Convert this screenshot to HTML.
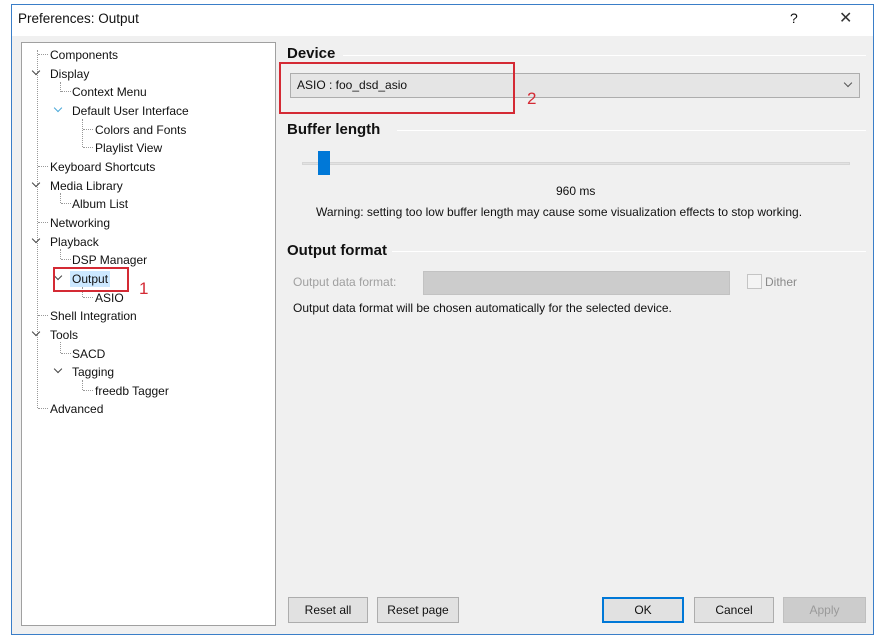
<!DOCTYPE html>
<html><head><meta charset="utf-8"><style>
*{margin:0;padding:0;box-sizing:border-box}
body{width:878px;height:639px;background:#fff;position:relative;overflow:hidden;font-family:"Liberation Sans",sans-serif;font-size:12px;color:#111}
.a{position:absolute;white-space:nowrap}
.win{position:absolute;left:11px;top:4px;width:863px;height:631px;border:1px solid #3a7ec8;background:#f0f0f0}
.title{position:absolute;left:12px;top:5px;width:861px;height:31px;background:#fff}
.tree{position:absolute;left:21px;top:42px;width:255px;height:584px;background:#fff;border:1px solid #a0a0a0}
.r{position:absolute;height:16px;line-height:16px;font-size:12px;white-space:nowrap}
.vl{position:absolute;border-left:1px dotted #999;width:0}
.hl{position:absolute;border-top:1px dotted #999;height:0}
.chev{position:absolute;width:6px;height:6px;border-right:1.5px solid #444;border-bottom:1.5px solid #444;transform:rotate(45deg)}
.h{position:absolute;font-weight:bold;font-size:15px;color:#111}
.line{position:absolute;height:1px;background:#a8a8a8;border-bottom:1px solid #fff}
.btn{position:absolute;height:26px;top:597px;background:#e1e1e1;border:1px solid #adadad;text-align:center;line-height:24px;font-size:12px}
.red{position:absolute;border:2px solid #d42a34}
</style></head><body>
<div class="win"></div>
<div class="title"></div>
<div class="a" style="left:18px;top:11px;font-size:13.5px">Preferences: Output</div>
<div class="a" style="left:790px;top:10px;font-size:14px">?</div>
<div class="a" style="left:839px;top:8px;font-size:16px;color:#333">✕</div>

<div class="tree"></div>
<div class="vl" style="left:37px;top:50px;height:358px"></div>
<div class="vl" style="left:60px;top:82px;height:10px"></div>
<div class="vl" style="left:82px;top:119px;height:28px"></div>
<div class="vl" style="left:60px;top:193px;height:10px"></div>
<div class="vl" style="left:60px;top:249px;height:10px"></div>
<div class="vl" style="left:82px;top:287px;height:10px"></div>
<div class="vl" style="left:60px;top:342px;height:11px"></div>
<div class="vl" style="left:82px;top:380px;height:10px"></div>
<div class="hl" style="left:38px;top:54px;width:10px"></div>
<div class="hl" style="left:61px;top:91px;width:10px"></div>
<div class="hl" style="left:83px;top:129px;width:10px"></div>
<div class="hl" style="left:83px;top:147px;width:10px"></div>
<div class="hl" style="left:38px;top:166px;width:10px"></div>
<div class="hl" style="left:61px;top:203px;width:10px"></div>
<div class="hl" style="left:38px;top:222px;width:10px"></div>
<div class="hl" style="left:61px;top:259px;width:10px"></div>
<div class="hl" style="left:83px;top:297px;width:10px"></div>
<div class="hl" style="left:38px;top:315px;width:10px"></div>
<div class="hl" style="left:61px;top:353px;width:10px"></div>
<div class="hl" style="left:83px;top:390px;width:10px"></div>
<div class="hl" style="left:38px;top:408px;width:10px"></div>
<div class="chev" style="left:33px;top:68px"></div>
<div class="chev" style="left:55px;top:105px;border-color:#4aa8d8"></div>
<div class="chev" style="left:33px;top:180px"></div>
<div class="chev" style="left:33px;top:236px"></div>
<div class="chev" style="left:55px;top:273px"></div>
<div class="chev" style="left:33px;top:329px"></div>
<div class="chev" style="left:55px;top:366px"></div>
<div class="r" style="left:50px;top:47px">Components</div>
<div class="r" style="left:50px;top:66px">Display</div>
<div class="r" style="left:72px;top:84px">Context Menu</div>
<div class="r" style="left:72px;top:103px">Default User Interface</div>
<div class="r" style="left:95px;top:122px">Colors and Fonts</div>
<div class="r" style="left:95px;top:140px">Playlist View</div>
<div class="r" style="left:50px;top:159px">Keyboard Shortcuts</div>
<div class="r" style="left:50px;top:178px">Media Library</div>
<div class="r" style="left:72px;top:196px">Album List</div>
<div class="r" style="left:50px;top:215px">Networking</div>
<div class="r" style="left:50px;top:234px">Playback</div>
<div class="r" style="left:72px;top:252px">DSP Manager</div>
<div class="r" style="left:70px;top:271px;background:#cce8ff;padding:0 2px">Output</div>
<div class="r" style="left:95px;top:290px">ASIO</div>
<div class="r" style="left:50px;top:308px">Shell Integration</div>
<div class="r" style="left:50px;top:327px">Tools</div>
<div class="r" style="left:72px;top:346px">SACD</div>
<div class="r" style="left:72px;top:364px">Tagging</div>
<div class="r" style="left:95px;top:383px">freedb Tagger</div>
<div class="r" style="left:50px;top:401px">Advanced</div>
<div class="red" style="left:53px;top:267px;width:76px;height:25px"></div>
<div class="a" style="left:139px;top:279px;color:#d42a34;font-size:17px">1</div>

<div class="h" style="left:287px;top:45px">Device</div>
<div class="line" style="left:343px;top:55px;width:523px"></div>
<div class="a" style="left:290px;top:73px;width:570px;height:25px;background:#e5e5e5;border:1px solid #adadad;line-height:23px;padding-left:6px;font-size:12px">ASIO : foo_dsd_asio</div>
<div class="chev" style="left:845px;top:80px;border-color:#555;width:6px;height:6px;border-width:1px"></div>
<div class="red" style="left:279px;top:62px;width:236px;height:52px"></div>
<div class="a" style="left:527px;top:89px;color:#d42a34;font-size:17px">2</div>

<div class="h" style="left:287px;top:121px">Buffer length</div>
<div class="line" style="left:397px;top:130px;width:469px"></div>
<div class="a" style="left:302px;top:162px;width:548px;height:3px;background:#e2e2e2;border:1px solid #d6d6d6"></div>
<div class="a" style="left:318px;top:151px;width:12px;height:24px;background:#0078d7"></div>
<div class="a" style="left:556px;top:184px;font-size:12px">960 ms</div>
<div class="a" style="left:316px;top:205px;font-size:12px">Warning: setting too low buffer length may cause some visualization effects to stop working.</div>

<div class="h" style="left:287px;top:242px">Output format</div>
<div class="line" style="left:392px;top:251px;width:474px"></div>
<div class="a" style="left:293px;top:275px;color:#a0a0a0;font-size:12px">Output data format:</div>
<div class="a" style="left:423px;top:271px;width:307px;height:24px;background:#cccccc;border:1px solid #c2c2c2"></div>
<div class="a" style="left:747px;top:274px;width:15px;height:15px;border:1px solid #c4c4c4;background:#f4f4f4"></div>
<div class="a" style="left:765px;top:275px;color:#8a8a8a;font-size:12px">Dither</div>
<div class="a" style="left:293px;top:301px;font-size:12px">Output data format will be chosen automatically for the selected device.</div>

<div class="btn" style="left:288px;width:80px">Reset all</div>
<div class="btn" style="left:377px;width:82px">Reset page</div>
<div class="btn" style="left:602px;width:82px;border:2px solid #0078d7;line-height:22px">OK</div>
<div class="btn" style="left:694px;width:80px">Cancel</div>
<div class="btn" style="left:783px;width:83px;background:#cccccc;border-color:#bfbfbf;color:#9a9a9a">Apply</div>
</body></html>
